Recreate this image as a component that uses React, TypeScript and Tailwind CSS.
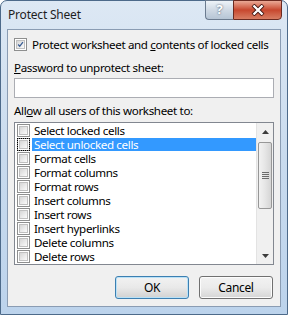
import React from 'react';

const perms = [
    'Select locked cells',
    'Select unlocked cells',
    'Format cells',
    'Format columns',
    'Format rows',
    'Insert columns',
    'Insert rows',
    'Insert hyperlinks',
    'Delete columns',
    'Delete rows',
];

function Box({ checked = false }: { checked?: boolean }) {
    return (
        <div className="w-[13px] h-[13px] border border-[#8e8f8f] bg-white p-[1px] shrink-0">
            <div className="w-full h-full border border-[#c0c0c0] bg-gradient-to-br from-[#d6d6d6] to-[#fbfbfb] flex items-center justify-center">
                {checked && (
                    <svg width="9" height="9" viewBox="0 0 9 9">
                        <path d="M1.5 4.5 L3.5 6.8 L7.6 1.5" fill="none" stroke="#3a5e94" strokeWidth="1.7" />
                    </svg>
                )}
            </div>
        </div>
    );
}

export default function App() {
    return (
        <div
            className="w-[288px] h-[315px] rounded-t-[7px] border border-[#4d6a8a] bg-gradient-to-b from-[#dde8f4] via-[#c9dbee] to-[#bcd3ec] flex flex-col text-[11.6px] text-black whitespace-nowrap tracking-[-0.35px]"
            style={{ fontFamily: '"Noto Sans", "Segoe UI", sans-serif' }}
        >
            {/* title bar */}
            <div className="h-[28px] flex items-start justify-between pl-[7px] pr-[5px]">
                <div className="h-[28px] leading-[28px] text-[12px] tracking-[-0.2px] text-[#1e1e1e]">Protect Sheet</div>
                <div className="flex -mt-[1px]">
                    <div className="w-[28px] h-[20px] rounded-bl-[4px] border border-[#6b7b8f] border-r-0 bg-gradient-to-b from-[#eef3f8] via-[#cfd9e4] to-[#b6c5d5] flex items-center justify-center text-[13px] font-bold text-white [text-shadow:0_0_2px_#34475d]">
                        ?
                    </div>
                    <div className="w-[49px] h-[20px] rounded-br-[4px] border border-[#6b2a20] bg-gradient-to-b from-[#e9a996] via-[#c7472e] to-[#d77d63] flex items-center justify-center">
                        <svg width="14" height="12" viewBox="0 0 14 12">
                            <path d="M2 1 L12 11 M12 1 L2 11" stroke="#3d1410" strokeWidth="4" />
                            <path d="M2.5 1.5 L11.5 10.5 M11.5 1.5 L2.5 10.5" stroke="#ffffff" strokeWidth="2.4" />
                        </svg>
                    </div>
                </div>
            </div>

            {/* client area */}
            <div className="mx-[6px] h-[278px] border border-[#8a9cb3] bg-[#f0f0f0] flex flex-col px-[6px]">
                <div className="mt-[7px] h-[15px] flex items-center gap-[5px]">
                    <Box checked />
                    <span className="leading-[15px]">
                        Protect worksheet and <u>c</u>ontents of locked cells
                    </span>
                </div>

                <div className="mt-[8px] h-[15px] leading-[15px]">
                    <u>P</u>assword to unprotect sheet:
                </div>
                <div className="mt-[3px] h-[20px] w-[260px] border border-[#abadb3] bg-white" />

                <div className="mt-[5px] h-[15px] leading-[15px]">
                    All<u>o</u>w all users of this worksheet to:
                </div>

                <div className="mt-[4px] h-[143px] w-[260px] border border-[#828790] bg-white flex">
                    <div className="flex-1 flex flex-col">
                        {perms.map((p, i) => (
                            <div key={p} className="h-[14px] flex items-center pl-[2px]">
                                <div className={i === 1 ? 'outline outline-1 outline-dotted outline-black -outline-offset-1' : ''}>
                                    <Box />
                                </div>
                                <span
                                    className={
                                        'ml-[2px] h-[13px] leading-[13px] pl-[2px] ' +
                                        (i === 1 ? 'bg-[#3399ff] text-white flex-1' : '')
                                    }
                                >
                                    {p}
                                </span>
                            </div>
                        ))}
                    </div>
                    {/* scrollbar */}
                    <div className="w-[17px] bg-[#f0f0f0] flex flex-col border-l border-[#e3e3e3]">
                        <div className="h-[17px] flex items-center justify-center">
                            <svg width="7" height="4" viewBox="0 0 7 4">
                                <path d="M0 4 L3.5 0 L7 4 Z" fill="#3c3c3c" />
                            </svg>
                        </div>
                        <div className="mx-[1px] mt-[2px] h-[67px] rounded-[2px] border border-[#979797] bg-gradient-to-r from-[#f2f2f2] via-[#e6e6e6] to-[#d5d5d5] flex flex-col items-center justify-center gap-[1px]">
                            <div className="w-[7px] h-[1px] bg-[#6b6b6b]" />
                            <div className="w-[7px] h-[1px] bg-[#6b6b6b]" />
                            <div className="w-[7px] h-[1px] bg-[#6b6b6b]" />
                            <div className="w-[7px] h-[1px] bg-[#6b6b6b]" />
                        </div>
                        <div className="flex-1" />
                        <div className="h-[17px] flex items-center justify-center">
                            <svg width="7" height="4" viewBox="0 0 7 4">
                                <path d="M0 0 L7 0 L3.5 4 Z" fill="#3c3c3c" />
                            </svg>
                        </div>
                    </div>
                </div>

                <div className="mt-[11px] flex justify-end gap-[10px] pr-[1px]">
                    <button className="w-[74px] h-[23px] rounded-[3px] border border-[#3c7fb1] bg-gradient-to-b from-[#f2f2f2] via-[#e9e9e9] to-[#d1d1d1] shadow-[inset_0_0_0_1px_#b9e1f7] text-[12px]">
                        OK
                    </button>
                    <button className="w-[74px] h-[23px] rounded-[3px] border border-[#707070] bg-gradient-to-b from-[#f2f2f2] via-[#ebebeb] to-[#d5d5d5] shadow-[inset_0_0_0_1px_#fcfcfc] text-[12px]">
                        Cancel
                    </button>
                </div>
            </div>
        </div>
    );
}
